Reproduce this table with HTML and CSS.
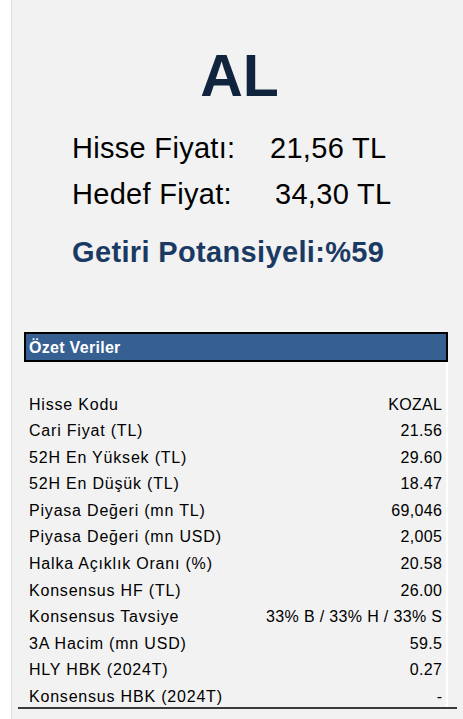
FILE: index.html
```html
<!DOCTYPE html>
<html lang="tr">
<head>
<meta charset="utf-8">
<title>Özet Veriler</title>
<link rel="stylesheet" href="styles.css">
</head>
<body>
<div class="panel">
  <div class="rating">AL</div>
  <div class="prices">
    <span>Hisse Fiyatı:</span><span class="val">21,56 TL</span>
    <span>Hedef Fiyat:</span><span class="val val2">34,30 TL</span>
  </div>
  <div class="potential">Getiri Potansiyeli:%59</div>
  <div class="head">Özet Veriler</div>
  <div class="data">
    <div class="row"><span>Hisse Kodu</span><span>KOZAL</span></div>
    <div class="row"><span>Cari Fiyat (TL)</span><span>21.56</span></div>
    <div class="row"><span>52H En Yüksek (TL)</span><span>29.60</span></div>
    <div class="row"><span>52H En Düşük (TL)</span><span>18.47</span></div>
    <div class="row"><span>Piyasa Değeri (mn TL)</span><span>69,046</span></div>
    <div class="row"><span>Piyasa Değeri (mn USD)</span><span>2,005</span></div>
    <div class="row"><span>Halka Açıklık Oranı (%)</span><span>20.58</span></div>
    <div class="row"><span>Konsensus HF (TL)</span><span>26.00</span></div>
    <div class="row"><span>Konsensus Tavsiye</span><span>33% B / 33% H / 33% S</span></div>
    <div class="row"><span>3A Hacim (mn USD)</span><span>59.5</span></div>
    <div class="row"><span>HLY HBK (2024T)</span><span>0.27</span></div>
    <div class="row last"><span>Konsensus HBK (2024T)</span><span>-</span></div>
  </div>
</div>
</body>
</html>
```

FILE: styles.css
```css
html, body {
  margin: 0;
  padding: 0;
  background: #ffffff;
}
body {
  font-family: "Liberation Sans", Arial, sans-serif;
  color: #000;
}
.panel {
  margin-left: 11px;
  border-left: 1px solid #dedede;
  background: #f2f2f2;
  height: 719px;
  box-sizing: border-box;
  padding-top: 41px;
  overflow: hidden;
}
.rating {
  text-align: center;
  font-size: 59px;
  font-weight: bold;
  line-height: 70px;
  color: #10243e;
  padding-left: 4px;
}
.prices {
  margin-top: 14px;
  padding-left: 60px;
  display: grid;
  grid-template-columns: 198px auto;
  font-size: 29px;
  line-height: 46px;
  letter-spacing: 0.3px;
}
.val2 {
  padding-left: 5px;
}
.potential {
  margin-top: 12px;
  padding-left: 60px;
  font-size: 29px;
  font-weight: bold;
  line-height: 46px;
  letter-spacing: 0.35px;
  color: #1b3a63;
}
.head {
  margin-top: 57px;
  margin-left: 12px;
  width: 424px;
  height: 30px;
  box-sizing: border-box;
  border: 2px solid #000;
  background: #366092;
  color: #fff;
  font-size: 16px;
  font-weight: bold;
  letter-spacing: 0.3px;
  line-height: 28px;
  padding-left: 3px;
}
.data {
  margin-left: 6px;
  width: 439px;
  box-sizing: border-box;
  padding: 29.5px 15px 0 11px;
  border-bottom: 2px solid #3a3a3a;
  background: linear-gradient(to right, transparent 428px, #ffffff 428px, #ffffff 430px, transparent 430px);
  font-size: 16px;
}
.row {
  display: flex;
  justify-content: space-between;
  height: 26.6px;
  line-height: 26.6px;
}
.row span:first-child {
  letter-spacing: 0.8px;
}
.row span:last-child {
  letter-spacing: 0.35px;
  margin-right: -0.35px;
}
.row.last {
  height: 23px;
}
```
